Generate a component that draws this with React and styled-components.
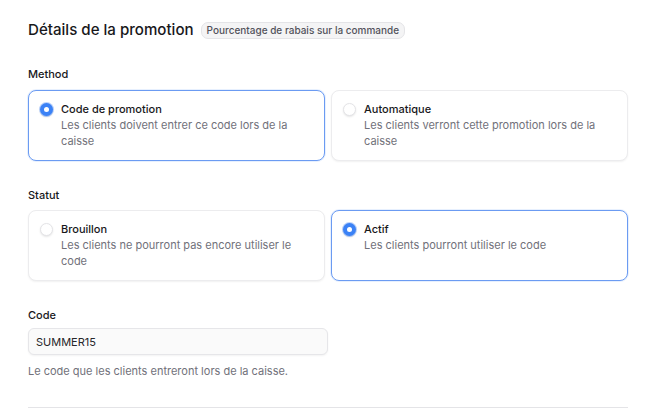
import React from "react";
import styled, { createGlobalStyle } from "styled-components";

const Global = createGlobalStyle`
  html, body { margin: 0; padding: 0; background: #ffffff; }
  body { font-family: Inter, "Noto Sans", sans-serif; color: #18181b; -webkit-font-smoothing: antialiased; }
  * { box-sizing: border-box; }
`;

const Page = styled.div`
  width: 648px;
  height: 413px;
  overflow: hidden;
  padding: 21px 20px 0 28px;
  display: flex;
  flex-direction: column;
`;

const Header = styled.div`
  display: flex;
  align-items: center;
  gap: 7px;
  height: 18px;
`;

const Title = styled.h1`
  margin: 0;
  font-size: 15.1px;
  font-weight: 500;
  line-height: 18px;
  color: #18181b;
`;

const Badge = styled.span`
  display: inline-flex;
  align-items: center;
  height: 17px;
  padding: 0 5px;
  border-radius: 7px;
  background: #f4f4f5;
  border: 1px solid #e4e4e7;
  font-size: 10px;
  color: #52525b;
  font-weight: 450;
`;

const Section = styled.section`
  margin-top: ${(p) => p.$top}px;
  display: flex;
  flex-direction: column;
  gap: ${(p) => p.$gap || 8}px;
`;

const Label = styled.div`
  font-size: 11px;
  line-height: 16px;
  font-weight: 500;
  color: #18181b;
`;

const Grid = styled.div`
  display: grid;
  grid-template-columns: 1fr 1fr;
  gap: 6px;
`;

const Card = styled.div`
  display: flex;
  gap: 8px;
  padding: 10px 12px 11px 11px;
  border-radius: 8px;
  background: #fff;
  border: 1px solid ${(p) => (p.$selected ? "#6b9bf2" : "#ececee")};
  box-shadow: ${(p) =>
    p.$selected
      ? "0 0 0 1px rgba(59,130,246,0.12)"
      : "0 1px 2px rgba(0,0,0,0.06)"};
`;

const Radio = styled.span`
  flex: none;
  margin-top: 1.5px;
  width: 13px;
  height: 13px;
  border-radius: 50%;
  display: flex;
  align-items: center;
  justify-content: center;
  background: ${(p) => (p.$checked ? "#3b82f6" : "#ffffff")};
  border: ${(p) => (p.$checked ? "none" : "1px solid #e4e4e7")};
  box-shadow: ${(p) =>
    p.$checked
      ? "0 0 0 1px rgba(59,130,246,0.35), 0 1px 2px rgba(0,0,0,0.15)"
      : "0 1px 2px rgba(0,0,0,0.1)"};
  &::after {
    content: "";
    display: ${(p) => (p.$checked ? "block" : "none")};
    width: 5px;
    height: 5px;
    border-radius: 50%;
    background: #fff;
  }
`;

const CardText = styled.div`
  display: flex;
  flex-direction: column;
`;

const CardTitle = styled.div`
  font-size: 11px;
  line-height: 16px;
  font-weight: 500;
  color: #18181b;
`;

const CardDesc = styled.div`
  font-size: 11px;
  line-height: 16px;
  color: #71717a;
`;

const Input = styled.input`
  width: 300px;
  height: 27px;
  padding: 0 7px;
  border-radius: 6px;
  border: 1px solid #e6e6e9;
  background: #fafafa;
  box-shadow: 0 1px 2px rgba(0,0,0,0.05);
  font-family: Inter, "Noto Sans", sans-serif;
  font-size: 11px;
  color: #27272a;
  outline: none;
`;

const Help = styled.div`
  margin-top: 3px;
  font-size: 11px;
  line-height: 16px;
  color: #71717a;
`;

const Divider = styled.hr`
  margin: 28px 0 0 0;
  width: 600px;
  border: none;
  border-top: 1px solid #e4e4e7;
`;

function Option({ checked, title, desc }) {
  return (
    <Card $selected={checked}>
      <Radio $checked={checked} />
      <CardText>
        <CardTitle>{title}</CardTitle>
        <CardDesc>{desc}</CardDesc>
      </CardText>
    </Card>
  );
}

export default function App() {
  return (
    <>
      <Global />
      <Page>
        <Header>
          <Title>Détails de la promotion</Title>
          <Badge>Pourcentage de rabais sur la commande</Badge>
        </Header>

        <Section $top={27}>
          <Label>Method</Label>
          <Grid>
            <Option
              checked
              title="Code de promotion"
              desc="Les clients doivent entrer ce code lors de la caisse"
            />
            <Option
              title="Automatique"
              desc="Les clients verront cette promotion lors de la caisse"
            />
          </Grid>
        </Section>

        <Section $top={26} $gap={7}>
          <Label>Statut</Label>
          <Grid>
            <Option
              title="Brouillon"
              desc="Les clients ne pourront pas encore utiliser le code"
            />
            <Option checked title="Actif" desc="Les clients pourront utiliser le code" />
          </Grid>
        </Section>

        <Section $top={26} $gap={5}>
          <Label>Code</Label>
          <Input defaultValue="SUMMER15" readOnly />
          <Help>Le code que les clients entreront lors de la caisse.</Help>
        </Section>

        <Divider />
      </Page>
    </>
  );
}
